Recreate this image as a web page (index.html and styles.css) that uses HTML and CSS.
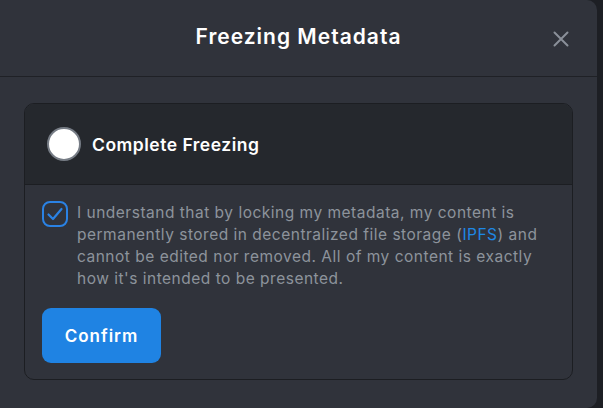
FILE: index.html
```html
<!DOCTYPE html>
<html>
<head>
<meta charset="utf-8">
<link rel="stylesheet" href="styles.css">
</head>
<body>
<div class="modal">
  <div class="header">
    <div class="spacer"></div>
    <h1 class="title">Freezing Metadata</h1>
    <button class="close" aria-label="Close">
      <svg width="16" height="16" viewBox="0 0 16 16"><path d="M1.5 1.5 L14.5 14.5 M14.5 1.5 L1.5 14.5" stroke="#8a9099" stroke-width="2" stroke-linecap="round" fill="none"/></svg>
    </button>
  </div>
  <div class="content">
    <div class="card">
      <div class="card-top">
        <span class="radio"></span>
        <span class="option">Complete Freezing</span>
      </div>
      <div class="card-body">
        <div class="agree">
          <span class="check">
            <svg width="26" height="26" viewBox="0 0 26 26"><rect x="1" y="1" width="24" height="24" rx="7" fill="none" stroke="#2a82e4" stroke-width="2"/><path d="M6.5 13.5 L11 18 L19.5 8" fill="none" stroke="#2a82e4" stroke-width="2.2" stroke-linecap="round" stroke-linejoin="round"/></svg>
          </span>
          <p class="agree-text">I understand that by locking my metadata, my content is permanently stored in decentralized file storage (<span class="link">IPFS</span>) and cannot be edited nor removed. All of my content is exactly how it's intended to be presented.</p>
        </div>
        <button class="confirm">Confirm</button>
      </div>
    </div>
  </div>
</div>
</body>
</html>
```

FILE: styles.css
```css
html, body {
  margin: 0;
  padding: 0;
}
body {
  background: #1d1f24;
  width: 603px;
  height: 408px;
  overflow: hidden;
  font-family: "Inter", "Open Sans", sans-serif;
}
.modal {
  width: 597px;
  height: 408px;
  background: #30333b;
  border-radius: 0 10px 10px 0;
  box-sizing: border-box;
}
.header {
  height: 77px;
  box-sizing: border-box;
  border-bottom: 1px solid #1f2126;
  display: grid;
  grid-template-columns: 1fr auto 1fr;
  align-items: center;
}
.title {
  margin: 0;
  color: #ffffff;
  font-size: 21px;
  font-weight: 600;
  letter-spacing: 1px;
  padding-bottom: 3px;
}
.close {
  justify-self: end;
  margin-right: 28px;
  margin-top: 2px;
  background: none;
  border: 0;
  padding: 0;
  width: 16px;
  height: 16px;
  display: flex;
}
.content {
  padding: 26px 24px 0 24px;
}
.card {
  border: 1px solid #1c1e22;
  border-radius: 10px;
  overflow: hidden;
  height: 277px;
  box-sizing: border-box;
}
.card-top {
  height: 81px;
  box-sizing: border-box;
  background: #25282d;
  border-bottom: 1px solid #1c1e22;
  display: flex;
  align-items: center;
  padding-left: 22px;
  gap: 11px;
}
.radio {
  width: 34px;
  height: 34px;
  box-sizing: border-box;
  border-radius: 50%;
  background: #ffffff;
  border: 2px solid #767c85;
  flex: none;
}
.option {
  color: #ffffff;
  font-size: 17.5px;
  font-weight: 600;
  letter-spacing: 0.5px;
}
.card-body {
  padding: 16px 17px;
}
.agree {
  display: flex;
  gap: 9px;
  align-items: flex-start;
}
.check {
  flex: none;
  width: 26px;
  height: 26px;
  display: flex;
}
.agree-text {
  margin: 0;
  margin-top: 1px;
  color: #8d939c;
  font-size: 15.5px;
  letter-spacing: 0.5px;
  line-height: 22px;
  width: 478px;
}
.link {
  color: #1e88e5;
}
.confirm {
  margin-top: 18px;
  width: 119px;
  height: 55px;
  border: 0;
  border-radius: 9px;
  background: #1f83e3;
  color: #ffffff;
  font-family: inherit;
  font-size: 17px;
  font-weight: 600;
  letter-spacing: 1px;
}
```
